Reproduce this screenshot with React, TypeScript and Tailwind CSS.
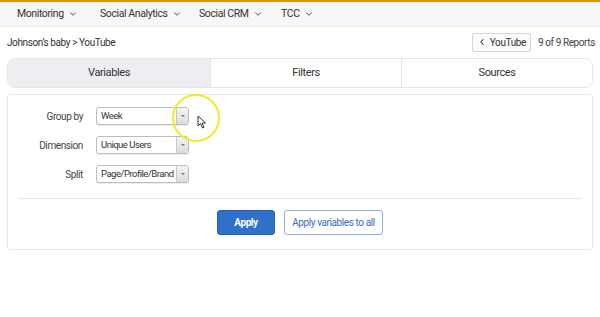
import { ChevronDown, ChevronLeft } from "lucide-react";

const font = {
  fontFamily: 'Roboto, "Liberation Sans", sans-serif',
};

const navItems = [
  { label: "Monitoring", w: "w-[83px]" },
  { label: "Social Analytics", w: "w-[99px]" },
  { label: "Social CRM", w: "w-[82px]" },
  { label: "TCC", w: "" },
];

function Select({ value }: { value: string }) {
  return (
    <div className="flex h-[18px] w-[93px] items-stretch overflow-hidden rounded-[3px] border border-[#bdbdbd] bg-white shadow-[0_1px_1px_rgba(0,0,0,0.08)]">
      <span className="flex-1 whitespace-nowrap pl-[4px] text-[9.5px] leading-[16px] tracking-[-0.5px] text-[#333]">{value}</span>
      <span className="flex w-[12px] shrink-0 items-center justify-center border-l border-[#c8c8c8] bg-gradient-to-b from-[#f4f4f4] to-[#dcdcdc]">
        <span className="h-0 w-0 border-x-[2px] border-t-[2px] border-x-transparent border-t-[#777]" />
      </span>
    </div>
  );
}

function Row({ label, value }: { label: string; value: string }) {
  return (
    <div className="flex items-center">
      <span className="w-[75px] text-right text-[10px] text-[#444]">{label}</span>
      <span className="ml-[13px]">
        <Select value={value} />
      </span>
    </div>
  );
}

export default function App() {
  return (
    <div className="relative h-[317px] w-[600px] overflow-hidden bg-white tracking-[-0.4px]" style={font}>
      <div className="h-[2px] bg-[#e3910f]" />
      <nav className="flex h-[25px] items-center border-b border-[#ececec] bg-[#f7f7f7] pl-[17px] text-[10.5px] text-[#333]">
        {navItems.map((item) => (
          <span key={item.label} className={"flex items-center gap-[4px] " + item.w}>
            {item.label}
            <ChevronDown size={10} strokeWidth={2} />
          </span>
        ))}
      </nav>

      <div className="flex h-[30px] items-center justify-between pl-[7px] pr-[5px]">
        <span className="text-[10px] text-[#333]">Johnson’s baby &gt; YouTube</span>
        <div className="flex items-center gap-[7px]">
          <span className="flex h-[19px] items-center gap-[3px] rounded-[2px] border border-[#d6d6d6] bg-[#fbfbfb] px-[4px] text-[10px] text-[#333]">
            <ChevronLeft size={10} strokeWidth={2.5} />
            YouTube
          </span>
          <span className="text-[10px] text-[#444]">9 of 9 Reports</span>
        </div>
      </div>

      <div className="mx-[7px] mt-[1px] flex h-[30px] overflow-hidden rounded-[8px] border border-[#e6e6e6] text-[11px] text-[#333]">
        <div className="flex w-[202px] items-center justify-center bg-[#ededf2]">Variables</div>
        <div className="flex w-[191px] items-center justify-center border-l border-[#e6e6e6] bg-white">Filters</div>
        <div className="flex flex-1 items-center justify-center border-l border-[#e6e6e6] bg-white">Sources</div>
      </div>

      <div className="mx-[7px] mt-[6px] h-[156px] rounded-[3px] border border-[#e8e8e8] pt-[12px]">
        <div className="flex flex-col gap-[11px]">
          <Row label="Group by" value="Week" />
          <Row label="Dimension" value="Unique Users" />
          <Row label="Split" value="Page/Profile/Brand" />
        </div>
        <div className="mx-[10px] mt-[15px] border-t border-[#e6e6e6]" />
        <div className="mt-[11px] flex justify-center gap-[9px]">
          <button className="h-[25px] w-[58px] rounded-[3px] border border-[#2a62b3] bg-[#2f70c8] text-[10px] font-bold text-white">
            Apply
          </button>
          <button className="h-[25px] w-[99px] rounded-[3px] border border-[#8fb0da] bg-white text-[10px] text-[#3a6fb7]">
            Apply variables to all
          </button>
        </div>
      </div>

      {/* cursor highlight overlay */}
      <div className="absolute left-[172px] top-[94px] h-[48px] w-[48px] rounded-full border-[2px] border-[#f2ea2a]" />
      <svg className="absolute left-[197px] top-[115px]" width="10" height="14" viewBox="0 0 10 14">
        <path d="M1 1 L1 11 L3.5 8.5 L5.5 13 L7 12.3 L5 8 L8.5 8 Z" fill="white" stroke="#333" strokeWidth="1" strokeLinejoin="round" />
      </svg>
    </div>
  );
}
